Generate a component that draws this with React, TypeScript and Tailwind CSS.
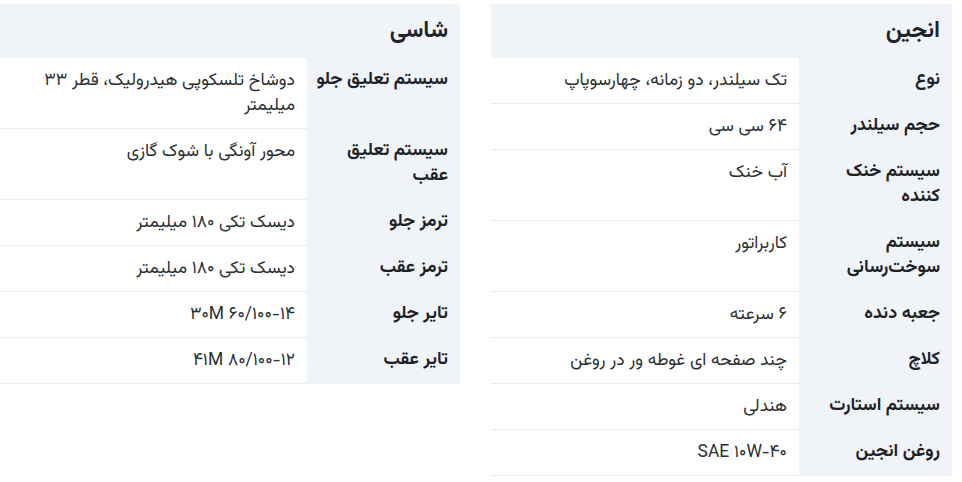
import React from "react";

type Spec = { label: string; value: string; nowrap?: boolean };

const engineSpecs: Spec[] = [
  { label: "نوع", value: "تک سیلندر، دو زمانه، چهارسوپاپ" },
  { label: "حجم سیلندر", value: "۶۴ سی سی" },
  { label: "سیستم خنک کننده", value: "آب خنک" },
  { label: "سیستم سوخت‌رسانی", value: "کاربراتور" },
  { label: "جعبه دنده", value: "۶ سرعته" },
  { label: "کلاچ", value: "چند صفحه ای غوطه ور در روغن" },
  { label: "سیستم استارت", value: "هندلی" },
  { label: "روغن انجین", value: "SAE ۱۰W-۴۰" },
];

const chassisSpecs: Spec[] = [
  { label: "سیستم تعلیق جلو", value: "دوشاخ تلسکوپی هیدرولیک، قطر ۳۳ میلیمتر", nowrap: true },
  { label: "سیستم تعلیق عقب", value: "محور آونگی با شوک گازی" },
  { label: "ترمز جلو", value: "دیسک تکی ۱۸۰ میلیمتر" },
  { label: "ترمز عقب", value: "دیسک تکی ۱۸۰ میلیمتر" },
  { label: "تایر جلو", value: "۶۰/۱۰۰-۱۴ ۳۰M" },
  { label: "تایر عقب", value: "۸۰/۱۰۰-۱۲ ۴۱M" },
];

function SpecTable({ title, specs }: { title: string; specs: Spec[] }) {
  return (
    <div className="flex flex-col">
      {/* Heading */}
      <div className="h-[54px] bg-[#f0f3f8] flex items-center px-3">
        <h3 className="text-[23px] font-bold text-[#1f2328]">{title}</h3>
      </div>
      {specs.map((s) => (
        <div key={s.label} className="grid grid-cols-[153px_1fr]">
          <div
            className={
              s.nowrap
                ? "bg-[#f0f3f8] px-3 pt-2.5 pb-[11px] leading-[25px] text-[18px] font-bold text-[#1f2328] whitespace-nowrap"
                : "bg-[#f0f3f8] px-3 pt-2.5 pb-[11px] leading-[25px] text-[18px] font-bold text-[#1f2328]"
            }
          >
            {s.label}
          </div>
          <div className="border-b border-[#e9ecf0] px-3 pt-2.5 pb-2.5 leading-[25px] text-[17.5px] text-[#2b2f33]">
            {s.value}
          </div>
        </div>
      ))}
    </div>
  );
}

export default function App() {
  return (
    <div
      dir="rtl"
      className="w-[962px] h-[482px] bg-white pt-1 pr-[10px] font-['Vazirmatn','Noto_Sans_Arabic','DejaVu_Sans',sans-serif]"
    >
      <div className="grid grid-cols-[461px_460px] gap-x-[31px] items-start">
        <SpecTable title="انجین" specs={engineSpecs} />
        <SpecTable title="شاسی" specs={chassisSpecs} />
      </div>
    </div>
  );
}
